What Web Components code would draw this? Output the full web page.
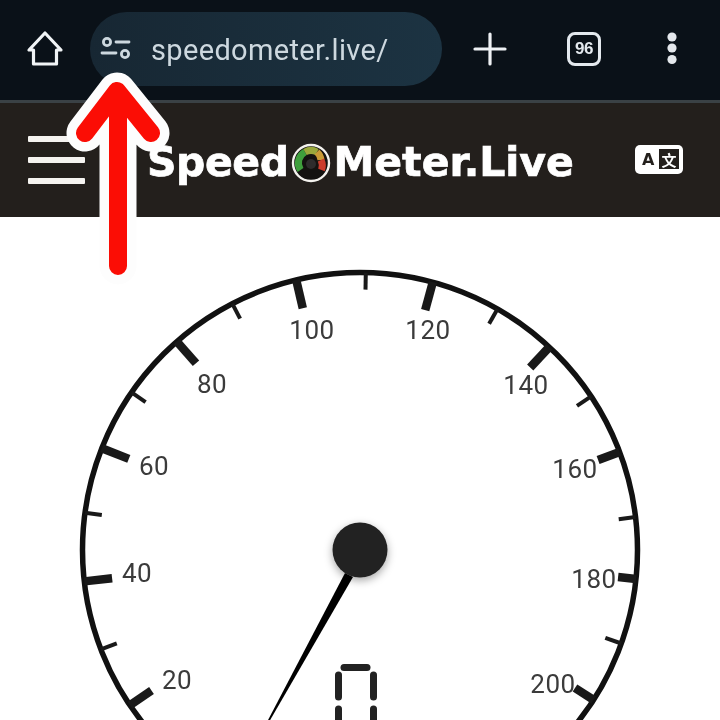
<!DOCTYPE html>
<html lang="en"><head><meta charset="utf-8"><title>SpeedoMeter.Live</title>
<style>
html,body{margin:0;padding:0;background:#fff}
body{width:720px;height:720px;overflow:hidden;position:relative;font-family:Roboto,"Liberation Sans",sans-serif}
</style></head><body>
<browser-toolbar url="speedometer.live/" tabs="96"></browser-toolbar>
<site-header></site-header>
<speed-gauge></speed-gauge>
<callout-arrow></callout-arrow>
<script>
function el(name,html){customElements.define(name,class extends HTMLElement{constructor(){super();this.attachShadow({mode:'open'}).innerHTML=typeof html==='function'?html(this):html}});}

el('browser-toolbar',h=>`<style>
:host{display:flex;align-items:center;box-sizing:border-box;height:103px;padding:0 0 2px 26px;background:#0a1118;border-bottom:3px solid #3a4145;filter:blur(.5px)}
svg{display:block;flex:none}
.pill{display:flex;align-items:center;gap:19px;box-sizing:border-box;width:352px;height:74px;margin:0 0 0 26px;padding:0 0 0 10px;border-radius:37px;background:linear-gradient(90deg,#172733,#1c3342);color:#cdd8df;font:29px Roboto,sans-serif;letter-spacing:.35px}
.pill span{margin-top:2px}
.plus{margin-left:31px}
.tabs{box-sizing:border-box;width:34px;height:34px;margin-left:60px;border:3.5px solid #e4e9ee;border-radius:8px;color:#e4e9ee;font:700 17px "Liberation Sans",sans-serif;letter-spacing:-.5px;display:flex;align-items:center;justify-content:center}
.more{margin-left:64px}
</style>
<svg width="38" height="38" viewBox="0 0 38 38" fill="none" stroke="#f1f4f6" stroke-width="3.2" stroke-linejoin="round"><path d="M19 3 3 20H7.5V34H30.5V20H35Z"/></svg>
<div class="pill"><svg width="32" height="26" viewBox="0 0 32 26" fill="none" stroke="#cdd8df" stroke-width="2.8" stroke-linecap="round"><circle cx="7" cy="6" r="3.6"/><path d="M16 6H29M2 17H16"/><circle cx="25" cy="18" r="3.6"/></svg><span>${h.getAttribute('url')}</span></div>
<svg class="plus" width="34" height="34" viewBox="0 0 34 34" stroke="#eef1f4" stroke-width="3.2" stroke-linecap="round"><path d="M17 2V32M2 17H32"/></svg>
<div class="tabs">${h.getAttribute('tabs')}</div>
<svg class="more" width="14" height="36" viewBox="0 0 14 36" fill="#e4e8ec"><circle cx="7" cy="6" r="4.6"/><circle cx="7" cy="17" r="4.6"/><circle cx="7" cy="28.500" r="4.6"/></svg>`);

el('site-header',`<style>
:host{display:flex;align-items:center;box-sizing:border-box;height:114px;padding:0 0 0 28px;background:#231f1c;color:#fff;filter:blur(.5px)}
.menu{display:flex;flex-direction:column;gap:15px;width:57px;margin-top:-1px}
.menu i{display:block;height:6px;border-radius:1px;background:#f5f3f0}
.logo{display:flex;align-items:center;margin-left:62px;font:700 41px "DejaVu Sans",sans-serif;letter-spacing:-.45px;line-height:1;-webkit-text-stroke:.7px #fff;margin-top:5px}
.logo svg{margin:0 3px 0 2px;flex:none}
.meter{letter-spacing:-.05px}
.tr{display:flex;align-items:center;box-sizing:border-box;width:48px;height:29px;margin:-2px 0 0 61px;padding:0 4px 0 6px;gap:4px;background:#fff;border-radius:5px;color:#231f1c}
.tr b{font:700 16px "DejaVu Sans",sans-serif;width:15px;text-align:center}
.tr span{display:flex;align-items:center;justify-content:center;width:20px;height:20px;background:#231f1c;color:#fff;font:700 15px "Noto Sans CJK SC",sans-serif;line-height:1}
</style>
<div class="menu"><i></i><i></i><i></i></div>
<div class="logo">Speed<svg width="40" height="40" viewBox="0 0 40 40" fill="none"><circle cx="20" cy="20" r="18" fill="#141210" stroke="#f4f2ee" stroke-width="2.4"/><path d="M9.500 27A12.500 12.500 0 0 1 14 9" stroke="#3f9f3c" stroke-width="7"/><path d="M14 9A12.500 12.500 0 0 1 26 9" stroke="#9aa83c" stroke-width="7"/><path d="M26 9A12.500 12.500 0 0 1 30 17" stroke="#c99a36" stroke-width="7"/><path d="M30 17A12.500 12.500 0 0 1 30.500 27" stroke="#cc3b2c" stroke-width="7"/><circle cx="20" cy="21" r="5" fill="#2e2c2c"/></svg><span class="meter">Meter.Live</span></div>
<div class="tr"><b>A</b><span>文</span></div>`);

el('speed-gauge',()=>{
 const cx=360,cy=550,r=277.5;
 const major=[[-124,26],[-96.5,28],[-68.5,29],[-41.3,29],[-13.3,29],[15.2,29],[43,28],[69.3,23],[96,18],[122.7,22]];
 const minor=[-111,-82.3,-55.4,-27.4,1.2,29.7,56.4,83.2,109.7];
 const tick=(a,l,w)=>{const t=a*Math.PI/180,s=Math.sin(t),c=-Math.cos(t);
  return `<line x1="${(cx+s*r).toFixed(1)}" y1="${(cy+c*r).toFixed(1)}" x2="${(cx+s*(r-l)).toFixed(1)}" y2="${(cy+c*(r-l)).toFixed(1)}" stroke-width="${w}"/>`};
 const labels=[[20,177,680],[40,137,573],[60,154,466],[80,212,384],[100,312,330],[120,428,330],[140,526,385],[160,575,469],[180,594,579],[200,553,684]];
 const seg=(x1,y1,x2,y2)=>`<line x1="${x1}" y1="${y1}" x2="${x2}" y2="${y2}"/>`;
 return `<style>
:host{display:block;height:503px;overflow:hidden;background:#fff;filter:blur(.45px)}
svg{display:block}
text{font:26px Roboto,sans-serif;letter-spacing:.5px;fill:#3b3b3b;text-anchor:middle;dominant-baseline:central}
</style>
<svg width="720" height="503" viewBox="0 217 720 503">
<defs><filter id="s" x="-30%" y="-30%" width="160%" height="170%"><feDropShadow dx="0" dy="3" stdDeviation="4" flood-color="#000" flood-opacity=".35"/></filter></defs>
<circle cx="${cx}" cy="${cy}" r="${r}" fill="none" stroke="#111" stroke-width="5.500"/>
<g stroke="#191919">${major.map(a=>tick(a[0],a[1],8.5)).join('')}${minor.map(a=>tick(a,17,4)).join('')}</g>
${labels.map(l=>`<text x="${l[1]}" y="${l[2]}">${l[0]}</text>`).join('')}
<polygon points="345,573 353,577 269,722 267,722" fill="#000"/>
<circle cx="360" cy="550" r="27.500" fill="#222" filter="url(#s)"/>
<g stroke="#222" stroke-width="7" stroke-linecap="round" fill="none">
<path d="M344 667.500H367"/>
${seg(338.500,675,338.500,697)}${seg(373.500,675,373.500,697)}${seg(338.500,709,338.500,730)}${seg(373.500,709,373.500,730)}
</g></svg>`});

el('callout-arrow',`<style>
:host{display:block;position:absolute;left:0;top:0;width:200px;height:300px;pointer-events:none;filter:blur(.4px)}
svg{display:block}
</style>
<svg width="200" height="300" viewBox="0 0 200 300" fill="none" stroke-linecap="round" stroke-linejoin="round">
<path d="M118 120V266M85 133 117 91 151 133" stroke="#fdfdfd" stroke-width="37"/>
<path d="M118 100V266M85 133 117 91 151 133" stroke="#fb0d05" stroke-width="18"/>
</svg>`);
</script>
</body></html>
